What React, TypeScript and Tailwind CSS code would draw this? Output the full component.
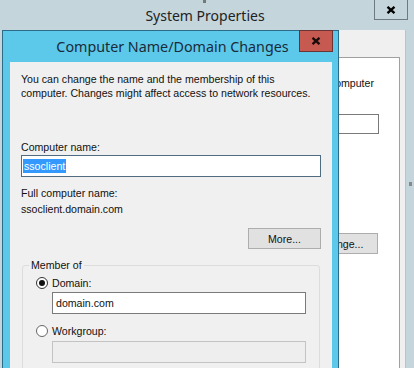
import React from "react";

function CloseGlyph({ className }: { className?: string }) {
  return (
    <svg viewBox="0 0 10 8" className={className} aria-hidden>
      <path d="M1.5 0.8 L8.5 7.2 M8.5 0.8 L1.5 7.2" stroke="currentColor" strokeWidth="2.3" fill="none" />
    </svg>
  );
}

function Radio({ checked }: { checked?: boolean }) {
  return (
    <span
      className={`flex h-[12px] w-[12px] shrink-0 items-center justify-center rounded-full border bg-white ${
        checked ? "border-[#333]" : "border-[#666]"
      }`}
    >
      {checked ? <span className="h-[6px] w-[6px] rounded-full bg-[#111]" /> : null}
    </span>
  );
}

export default function App() {
  return (
    <div className="relative h-[368px] w-[414px] overflow-hidden bg-[#c5d5dc] font-['Liberation_Sans',Arial,sans-serif] text-[10.6px] leading-[14px] text-[#111]">
      {/* System Properties, behind */}
      <div className="flex h-[30px] items-center justify-center pr-[4px] pt-[2px]">
        <span className="font-['Noto_Sans',sans-serif] text-[14px] leading-none text-[#222]">System Properties</span>
      </div>
      <div className="absolute right-[6px] top-0 flex h-[20px] w-[34px] items-center justify-center border border-t-0 border-[#6e7a80] text-black">
        <CloseGlyph className="h-[8px] w-[10px]" />
      </div>
      <span className="absolute left-[203px] top-0 h-[3px] w-[3px] bg-[#777]" />
      <span className="absolute right-[2px] top-[182px] h-[4px] w-[3px] bg-[#888]" />

      <div className="ml-[10px] mr-[8px] h-[338px] border-r border-[#b8c4c8] bg-[#f0f0f0] pr-[5px] pt-[27px]">
        <div className="flex h-full flex-col border-r border-t border-[#a0a0a0] bg-white pt-[18px]">
          <div className="flex justify-end whitespace-nowrap pr-[25px]">computer</div>
          <div className="mt-[24px] flex justify-end pr-[20px]">
            <div className="h-[20px] w-[200px] border border-[#7a7a7a] bg-white" />
          </div>
          <div className="mt-[99px] flex justify-end pr-[21px]">
            <div className="flex h-[21px] w-[75px] items-center justify-center border border-[#adadad] bg-[#e1e1e1]">
              Change...
            </div>
          </div>
        </div>
      </div>

      {/* Computer Name/Domain Changes dialog */}
      <div className="absolute left-[2px] top-[30px] flex h-[345px] w-[337px] flex-col border border-[#2c6c88] bg-[#5cc8ea]">
        <div className="flex h-[31px] shrink-0 items-center justify-center pl-[4px] pt-[1px]">
          <span className="font-['Noto_Sans',sans-serif] text-[14.3px] leading-none text-[#1b2b38]">
            Computer Name/Domain Changes
          </span>
        </div>
        <div className="absolute left-[296px] top-[-1px] flex h-[22px] w-[34px] items-center justify-center border border-[#6b3434] bg-[#c75a50] text-[#1a0a0a]">
          <CloseGlyph className="h-[8px] w-[10px]" />
        </div>

        <div className="ml-[7px] mr-[6px] flex flex-1 flex-col bg-[#f0f0f0] pl-[11px] pr-[11px] pt-[10px]">
          <p className="whitespace-nowrap">
            You can change the name and the membership of this
            <br />
            computer. Changes might affect access to network resources.
          </p>

          <label className="mt-[40px] block">Computer name:</label>
          <div className="mt-[1px] flex h-[22px] w-[300px] items-center border border-[#4f6c82] bg-white px-[1px]">
            <span className="bg-[#3399ff] px-[1px] text-white">ssoclient</span>
          </div>

          <div className="mt-[9px]">Full computer name:</div>
          <div className="mt-[2px]">ssoclient.domain.com</div>

          <div className="mt-[12px] flex justify-end">
            <div className="flex h-[21px] w-[73px] items-center justify-center border border-[#adadad] bg-[#e1e1e1]">
              More...
            </div>
          </div>

          <div className="relative ml-[1px] mt-[16px] w-[298px] flex-1 rounded-[3px] border border-[#dcdcdc] pl-[13px] pt-[10px]">
            <span className="absolute left-[6px] top-[-8px] bg-[#f0f0f0] px-[2px]">Member of</span>
            <span className="absolute bottom-[-1px] left-[181px] h-[3px] w-[3px] bg-[#777]" />

            <div className="flex h-[14px] items-center gap-[4px]">
              <Radio checked />
              <span>Domain:</span>
            </div>
            <div className="ml-[16px] mt-[2px] flex h-[22px] w-[254px] items-center border border-[#7a7a7a] bg-white px-[3px]">
              domain.com
            </div>

            <div className="mt-[10px] flex h-[14px] items-center gap-[4px]">
              <Radio />
              <span>Workgroup:</span>
            </div>
            <div className="ml-[16px] mt-[3px] h-[22px] w-[254px] border border-[#c3c3c3] bg-[#eeeeee]" />
          </div>
        </div>
      </div>
    </div>
  );
}
